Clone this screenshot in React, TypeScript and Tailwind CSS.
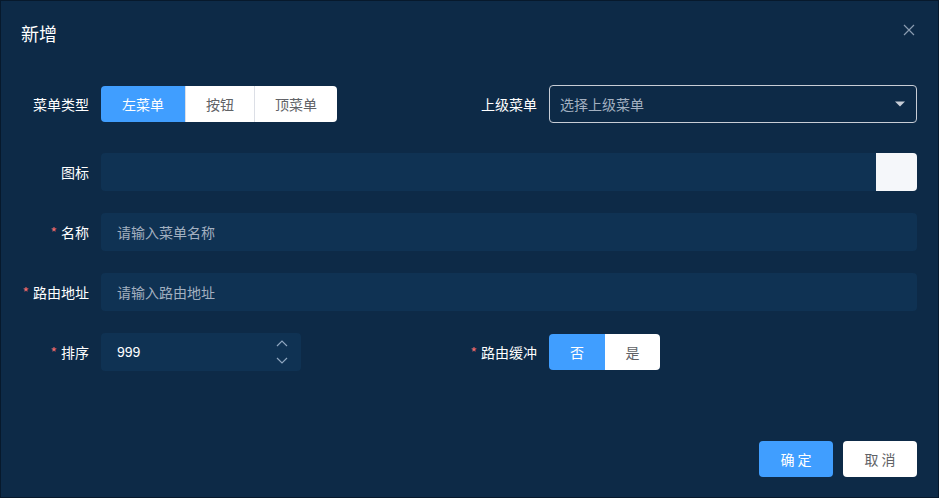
import { useState } from "react";

const font = { fontFamily: '"Noto Sans CJK SC", "Noto Sans", sans-serif' };

function Label({ text, required }: { text: string; required?: boolean }) {
  return (
    <div className="w-[80px] shrink-0 pr-3 text-right text-[14px] text-white leading-none">
      {required && <span className="mr-1 text-[#f56c6c]">*</span>}
      {text}
    </div>
  );
}

export default function App() {
  const [menuType, setMenuType] = useState("left");
  const [keepAlive, setKeepAlive] = useState(false);

  const types = [
    { key: "left", text: "左菜单", w: "w-[84px]" },
    { key: "btn", text: "按钮", w: "w-[69px]" },
    { key: "top", text: "顶菜单", w: "w-[83px]" },
  ];

  return (
    <div style={font} className="w-[939px] h-[498px] bg-[#0d2a47] border border-[#07192c] relative">
      <div className="flex items-center h-[64px] pl-5 pr-[21px]">
        <span className="text-[18px] text-white">新增</span>
      </div>
      <button className="absolute right-[22px] top-[22px] text-[#8a9bb0]">
        <svg width="14" height="14" viewBox="0 0 14 14" fill="none" stroke="currentColor" strokeWidth="1.2">
          <path d="M2 2l10 10M12 2L2 12" />
        </svg>
      </button>

      <div className="pl-5 pr-[21px] pt-[20px]">
        <div className="grid grid-cols-2">
          <div className="flex items-center h-[38px]">
            <Label text="菜单类型" />
            <div className="flex h-[36px] rounded overflow-hidden">
              {types.map((t, i) => (
                <button
                  key={t.key}
                  onClick={() => setMenuType(t.key)}
                  className={`${t.w} text-[14px] ${
                    menuType === t.key ? "bg-[#409eff] text-white" : "bg-white text-[#606266]"
                  } ${i > 0 ? "border-l border-[#dcdfe6]" : ""}`}
                >
                  {t.text}
                </button>
              ))}
            </div>
          </div>
          <div className="flex items-center h-[38px]">
            <Label text="上级菜单" />
            <div className="flex-1 h-[38px] rounded border border-[#c8cdd6] flex items-center justify-between pl-[10px] pr-[10px]">
              <span className="text-[14px] text-[#a3b0c0]">选择上级菜单</span>
              <svg width="12" height="8" viewBox="0 0 12 8">
                <path d="M1 1.5h10L6 6.5z" fill="#c6ccd6" />
              </svg>
            </div>
          </div>
        </div>

        <div className="flex items-center h-[38px] mt-[30px]">
          <Label text="图标" />
          <div className="flex-1 h-[38px] rounded flex overflow-hidden">
            <div className="flex-1 bg-[#0f3253]" />
            <div className="w-[41px] bg-[#f5f7fa]" />
          </div>
        </div>

        <div className="flex items-center h-[38px] mt-[22px]">
          <Label text="名称" required />
          <div className="flex-1 h-[38px] rounded bg-[#0f3253] flex items-center px-4">
            <span className="text-[14px] text-[#a3b0c0]">请输入菜单名称</span>
          </div>
        </div>

        <div className="flex items-center h-[38px] mt-[22px]">
          <Label text="路由地址" required />
          <div className="flex-1 h-[38px] rounded bg-[#0f3253] flex items-center px-4">
            <span className="text-[14px] text-[#a3b0c0]">请输入路由地址</span>
          </div>
        </div>

        <div className="grid grid-cols-2 mt-[22px]">
          <div className="flex items-center h-[38px]">
            <Label text="排序" required />
            <div className="w-[200px] h-[38px] rounded bg-[#0f3253] flex items-center justify-between pl-4 pr-[13px]">
              <span className="text-[14px] text-white" style={{ fontFamily: '"Liberation Sans", sans-serif' }}>999</span>
              <div className="flex flex-col items-center gap-[10px] text-[#8fa6bf]">
                <svg width="12" height="7" viewBox="0 0 12 7" fill="none" stroke="currentColor" strokeWidth="1.2">
                  <path d="M1 6l5-5 5 5" />
                </svg>
                <svg width="12" height="7" viewBox="0 0 12 7" fill="none" stroke="currentColor" strokeWidth="1.2">
                  <path d="M1 1l5 5 5-5" />
                </svg>
              </div>
            </div>
          </div>
          <div className="flex items-center h-[38px]">
            <Label text="路由缓冲" required />
            <div className="flex h-[36px] rounded overflow-hidden">
              <button
                onClick={() => setKeepAlive(false)}
                className={`w-[56px] text-[14px] ${!keepAlive ? "bg-[#409eff] text-white" : "bg-white text-[#606266]"}`}
              >
                否
              </button>
              <button
                onClick={() => setKeepAlive(true)}
                className={`w-[55px] text-[14px] ${keepAlive ? "bg-[#409eff] text-white" : "bg-white text-[#606266]"}`}
              >
                是
              </button>
            </div>
          </div>
        </div>
      </div>

      <div className="flex justify-end gap-[10px] pl-5 pr-[21px] mt-[70px]">
        <button className="w-[74px] h-[36px] rounded bg-[#409eff] text-white text-[14px] tracking-[3px] pl-[3px]">确定</button>
        <button className="w-[74px] h-[36px] rounded bg-white text-[#606266] text-[14px] tracking-[3px] pl-[3px]">取消</button>
      </div>
    </div>
  );
}
